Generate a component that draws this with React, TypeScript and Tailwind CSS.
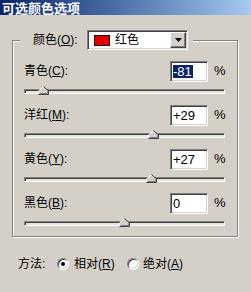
import type { ReactNode } from "react";

type Row = { label: string; hotkey: string; value: string; n: number; selected?: boolean };

const rows: Row[] = [
  { label: "青色", hotkey: "C", value: "-81", n: -81, selected: true },
  { label: "洋红", hotkey: "M", value: "+29", n: 29 },
  { label: "黄色", hotkey: "Y", value: "+27", n: 27 },
  { label: "黑色", hotkey: "B", value: "0", n: 0 },
];

function Label(props: { text: string; hotkey: string; colon?: boolean }) {
  return (
    <span className="whitespace-nowrap">
      {props.text}(<span className="underline underline-offset-[1px]">{props.hotkey}</span>){props.colon ? ":" : ""}
    </span>
  );
}

function Thumb(props: { value: number }) {
  // track is 200px wide, 0 sits in the middle, 1px per unit
  return (
    <svg
      width="11"
      height="9"
      viewBox="0 0 11 9"
      className="absolute top-[-4px]"
      style={{ left: 100 + props.value - 6 }}
    >
      <polygon points="0.5,8.5 0.5,5 5.5,0.5 10.5,5 10.5,8.5" fill="#d4d0c8" />
      <polyline points="0.5,8 0.5,5 5.5,0.5" fill="none" stroke="#ffffff" />
      <polyline points="5.5,0.5 10.5,5 10.5,8.5 0.5,8.5" fill="none" stroke="#404040" />
      <polyline points="9.5,5.5 9.5,7.5 1.5,7.5" fill="none" stroke="#808080" />
    </svg>
  );
}

function Radio(props: { checked?: boolean }) {
  return (
    <span className="relative flex h-[12px] w-[12px] items-center justify-center rounded-full border border-b-white border-l-[#808080] border-r-white border-t-[#808080] bg-white shadow-[inset_1px_1px_0_#404040,inset_-1px_-1px_0_#d4d0c8]">
      {props.checked ? <span className="h-[4px] w-[4px] rounded-full bg-black" /> : null}
    </span>
  );
}

function Sunken(props: { className: string; children: ReactNode }) {
  return (
    <div
      className={
        "flex items-center border border-b-white border-l-[#808080] border-r-white border-t-[#808080] bg-white shadow-[inset_1px_1px_0_#404040,inset_-1px_-1px_0_#d4d0c8] " +
        props.className
      }
    >
      {props.children}
    </div>
  );
}

export default function App() {
  return (
    <div className="h-[292px] w-[251px] overflow-hidden bg-[#d4d0c8] font-['Liberation_Sans','Noto_Sans_CJK_SC',sans-serif] text-[12px] leading-[14px] text-black">
      {/* title bar */}
      <div className="flex h-[15px] items-center bg-linear-to-r from-[#0a246a] to-[#a6caf0] pl-[2px] font-['Noto_Sans_CJK_SC',sans-serif] text-[13px] font-bold leading-[13px] text-white">
        <span>可选颜色选项</span>
      </div>

      <fieldset className="ml-[12px] mt-[15px] w-[226px] border border-[#808080] px-0 pb-[10px] pt-[11px] shadow-[1px_1px_0_#ffffff,inset_1px_1px_0_#ffffff]">
        <legend className="ml-[7px] bg-[#d4d0c8] pl-[13px] pr-[5px]">
          <div className="flex h-[20px] items-center">
            <span className="w-[54px]">
              <Label text="颜色" hotkey="O" colon />
            </span>
            <Sunken className="h-[20px] w-[101px]">
              <span className="ml-[6px] h-[11px] w-[16px] border border-[#300000] bg-[#e00000]" />
              <span className="ml-[5px]">红色</span>
              <span className="ml-auto mr-[1px] flex h-[16px] w-[16px] items-center justify-center border border-b-[#404040] border-l-white border-r-[#404040] border-t-white bg-[#d4d0c8] shadow-[inset_-1px_-1px_0_#808080]">
                <svg width="7" height="4" viewBox="0 0 7 4">
                  <polygon points="0,0 7,0 3.5,4" fill="#000" />
                </svg>
              </span>
            </Sunken>
          </div>
        </legend>

        <div className="flex flex-col gap-[11px] pl-[11px] pr-[12px]">
          {rows.map((r) => (
            <div key={r.hotkey} className="flex flex-col">
              <div className="flex h-[20px] items-center">
                <span className="flex-1">
                  <Label text={r.label} hotkey={r.hotkey} colon />
                </span>
                <Sunken className="h-[21px] w-[38px] pl-[2px] text-[13px]">
                  {r.selected ? (
                    <span className="bg-[#0a246a] pr-[1px] leading-[13px] text-white">{r.value}</span>
                  ) : (
                    <span className="leading-[13px]">{r.value}</span>
                  )}
                </Sunken>
                <span className="w-[17px] pl-[6px] text-[13px]">%</span>
              </div>
              <div className="relative mt-[8px] h-[5px] border border-b-white border-l-[#808080] border-r-white border-t-[#808080] bg-[#e6e3dd] shadow-[inset_1px_1px_0_#404040]">
                <Thumb value={r.n} />
              </div>
            </div>
          ))}
        </div>
      </fieldset>

      <div className="mt-[19px] flex h-[16px] items-center pl-[18px]">
        <span className="w-[39px]">方法:</span>
        <Radio checked />
        <span className="ml-[5px] w-[53px]">
          <Label text="相对" hotkey="R" />
        </span>
        <Radio />
        <span className="ml-[4px]">
          <Label text="绝对" hotkey="A" />
        </span>
      </div>
    </div>
  );
}
